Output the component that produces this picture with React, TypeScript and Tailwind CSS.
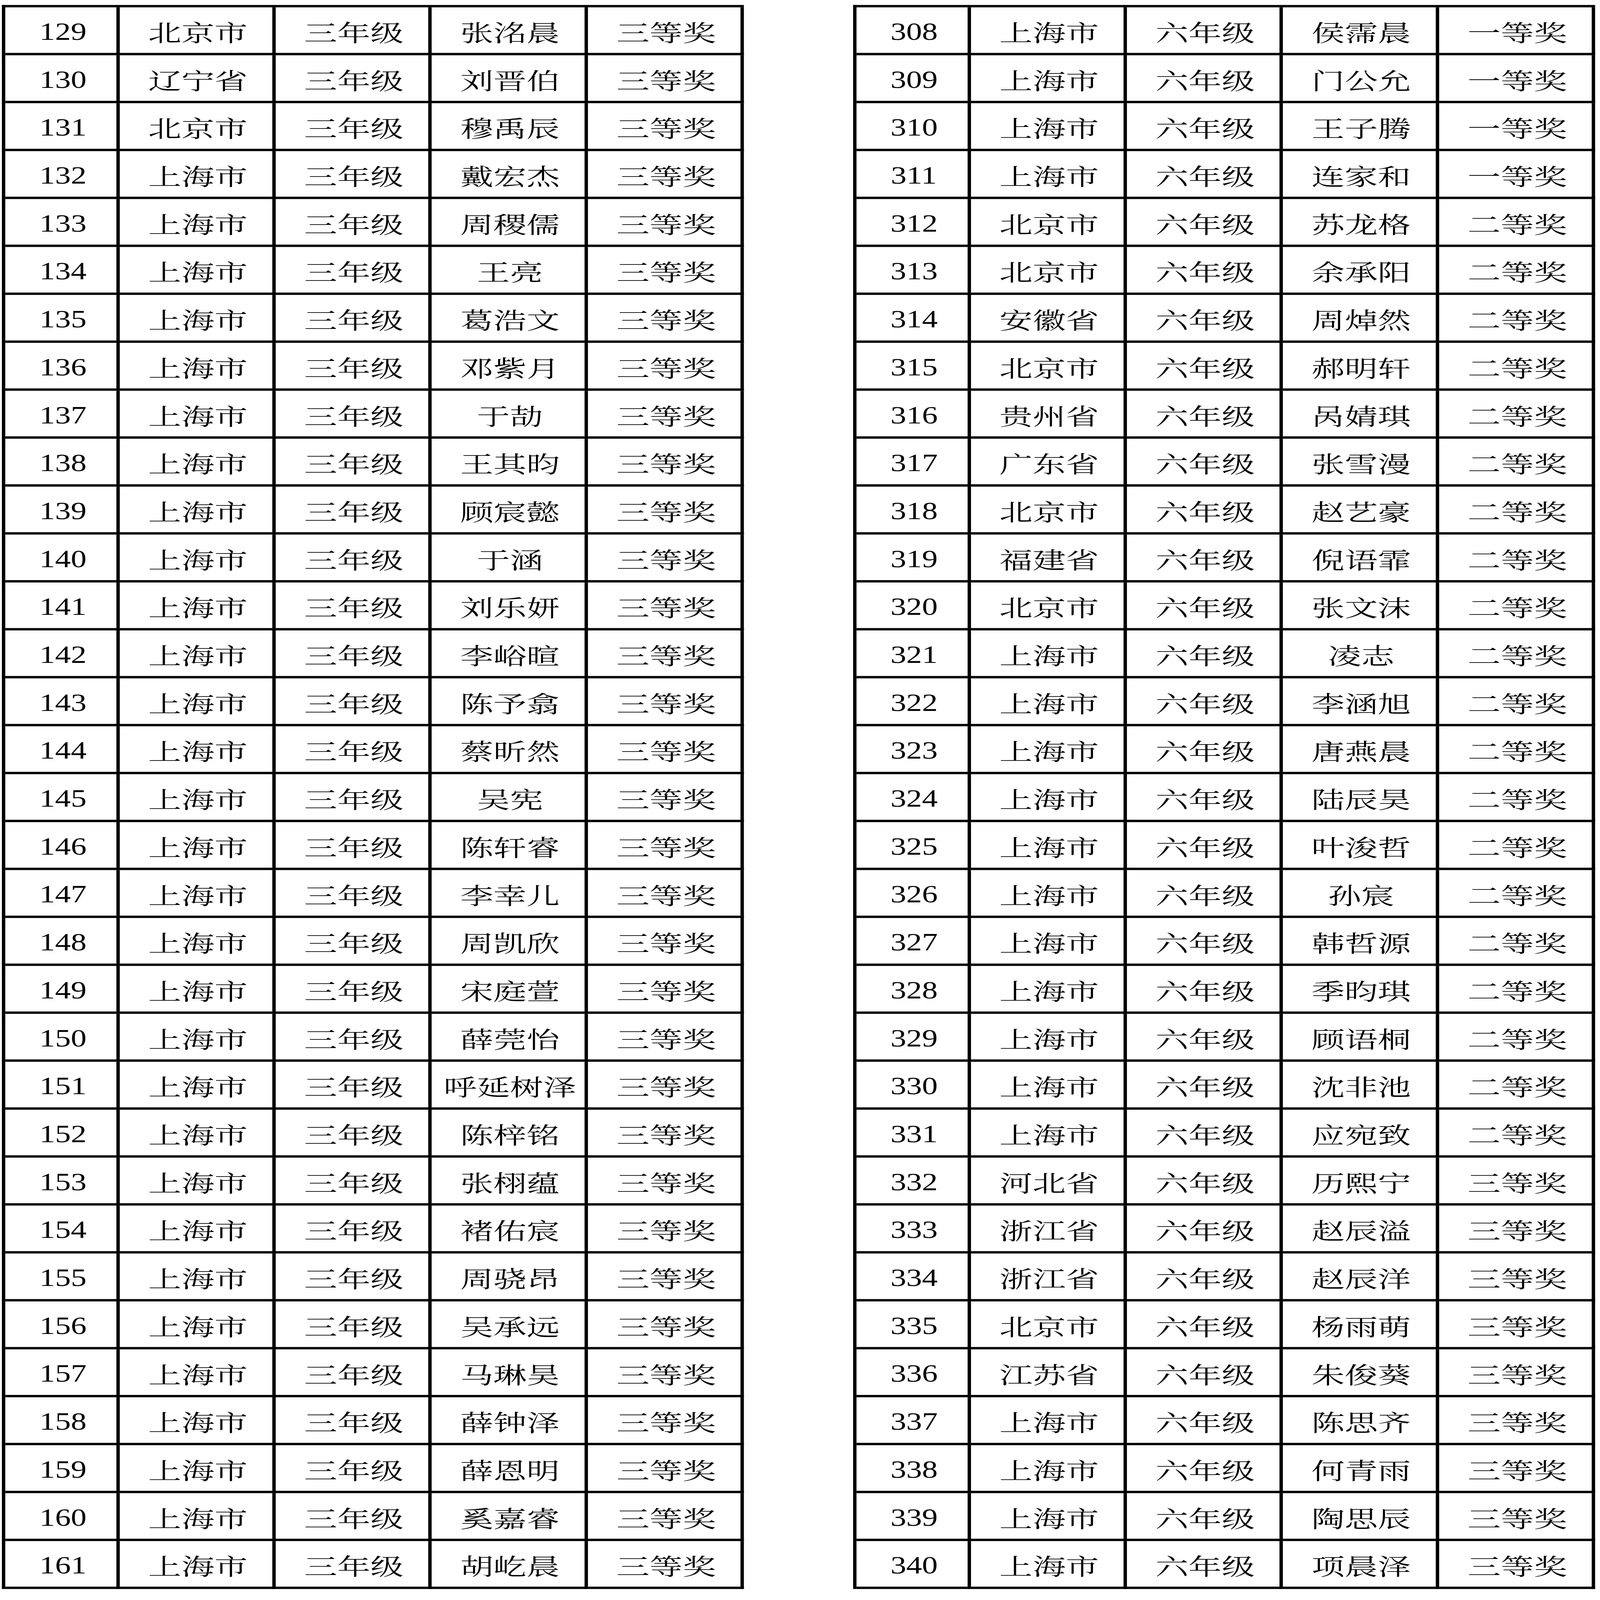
import React, { useEffect, useState } from "react";

type Row = [string, string, string, string, string];

const PAGE_W = 4248;
const PAGE_H = 6109;

const leftNames = [
  "张洺晨", "刘晋伯", "穆禹辰", "戴宏杰", "周稷儒", "王亮", "葛浩文", "邓紫月",
  "于劼", "王其昀", "顾宸懿", "于涵", "刘乐妍", "李峪暄", "陈予翕", "蔡昕然",
  "吴宪", "陈轩睿", "李幸儿", "周凯欣", "宋庭萱", "薛莞怡", "呼延树泽", "陈梓铭",
  "张栩蕴", "褚佑宸", "周骁昂", "吴承远", "马琳昊", "薛钟泽", "薛恩明", "奚嘉睿",
  "胡屹晨",
];

const leftRows: Row[] = leftNames.map((name, i) => {
  const region = i === 0 || i === 2 ? "北京市" : i === 1 ? "辽宁省" : "上海市";
  return [String(129 + i), region, "三年级", name, "三等奖"];
});

// [region, name, prize]
const rightData: [string, string, string][] = [
  ["上海市", "侯霈晨", "一等奖"],
  ["上海市", "门公允", "一等奖"],
  ["上海市", "王子腾", "一等奖"],
  ["上海市", "连家和", "一等奖"],
  ["北京市", "苏龙格", "二等奖"],
  ["北京市", "余承阳", "二等奖"],
  ["安徽省", "周焯然", "二等奖"],
  ["北京市", "郝明轩", "二等奖"],
  ["贵州省", "呙婧琪", "二等奖"],
  ["广东省", "张雪漫", "二等奖"],
  ["北京市", "赵艺豪", "二等奖"],
  ["福建省", "倪语霏", "二等奖"],
  ["北京市", "张文沫", "二等奖"],
  ["上海市", "凌志", "二等奖"],
  ["上海市", "李涵旭", "二等奖"],
  ["上海市", "唐燕晨", "二等奖"],
  ["上海市", "陆辰昊", "二等奖"],
  ["上海市", "叶浚哲", "二等奖"],
  ["上海市", "孙宸", "二等奖"],
  ["上海市", "韩哲源", "二等奖"],
  ["上海市", "季昀琪", "二等奖"],
  ["上海市", "顾语桐", "二等奖"],
  ["上海市", "沈非池", "二等奖"],
  ["上海市", "应宛致", "二等奖"],
  ["河北省", "历熙宁", "三等奖"],
  ["浙江省", "赵辰溢", "三等奖"],
  ["浙江省", "赵辰洋", "三等奖"],
  ["北京市", "杨雨萌", "三等奖"],
  ["江苏省", "朱俊葵", "三等奖"],
  ["上海市", "陈思齐", "三等奖"],
  ["上海市", "何青雨", "三等奖"],
  ["上海市", "陶思辰", "三等奖"],
  ["上海市", "项晨泽", "三等奖"],
];

const rightRows: Row[] = rightData.map(([region, name, prize], i) => [
  String(308 + i),
  region,
  "六年级",
  name,
  prize,
]);

function AwardTable({ rows }: { rows: Row[] }) {
  return (
    <div className="grid grid-cols-[304px_414px_414px_415px_414px] self-start border-l-[9px] border-t-[9px] border-black">
      {rows.map((row) =>
        row.map((cell, i) => (
          <div
            key={row[0] + "-" + i}
            className="flex h-[183px] items-center justify-center border-b-[9px] border-r-[9px] border-black pl-[10px] pt-[9px]"
          >
            {i === 0 ? (
              <span className="inline-block scale-x-[0.87] font-['Liberation_Serif',serif] text-[96px] leading-none">
                {cell}
              </span>
            ) : (
              <span className="whitespace-nowrap font-['Noto_Serif_CJK_SC','Noto_Sans_CJK_SC',serif] text-[88px] font-normal leading-none">
                {cell}
              </span>
            )}
          </div>
        ))
      )}
    </div>
  );
}

// The page is laid out at its native 4248x6109 size; if the browser window
// is smaller than that, the whole sheet is scaled down to fit it.
function useFit() {
  const measure = () => ({
    x: Math.min(1, window.innerWidth / PAGE_W),
    y: Math.min(1, window.innerHeight / PAGE_H),
  });
  const [fit, setFit] = useState(measure);
  useEffect(() => {
    const onResize = () => setFit(measure());
    window.addEventListener("resize", onResize);
    return () => window.removeEventListener("resize", onResize);
  }, []);
  return fit;
}

export default function App() {
  const fit = useFit();
  return (
    <div className="h-screen w-screen overflow-hidden bg-white">
      <div
        className="flex h-[6109px] w-[4248px] origin-top-left gap-[290px] bg-white pl-[5px] pt-[19px] text-black"
        style={{ transform: `scale(${fit.x}, ${fit.y})` }}
      >
        <AwardTable rows={leftRows} />
        <AwardTable rows={rightRows} />
      </div>
    </div>
  );
}
